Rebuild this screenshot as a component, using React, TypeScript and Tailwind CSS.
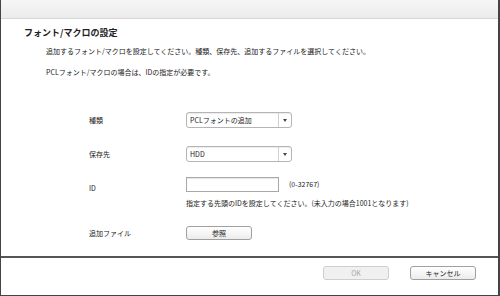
import React from 'react';

const font = { fontFamily: '"Noto Sans CJK JP", "Liberation Sans", sans-serif' };

function Select({ value }: { value: string }) {
  return (
    <div className="flex h-[16px] w-[106px] items-stretch rounded-[3px] border border-[#b5b5b5] bg-white shadow-[inset_0_1px_1px_rgba(0,0,0,0.08)]">
      <div className="flex flex-1 items-center pl-[3px] text-[7px] text-[#222]">{value}</div>
      <div className="flex w-[13px] items-center justify-center border-l border-[#d0d0d0]">
        <span className="block h-0 w-0 border-x-[2px] border-t-[3px] border-x-transparent border-t-[#444]" />
      </div>
    </div>
  );
}

function Button({ label, disabled = false }: { label: string; disabled?: boolean }) {
  return (
    <div
      className={`flex h-[14px] w-[66px] items-center justify-center rounded-[3px] border text-[7px] ${
        disabled
          ? 'border-[#cfcfcf] bg-[#f0f0f0] text-[#a8a8a8]'
          : 'border-[#a0a0a0] bg-gradient-to-b from-white to-[#ececec] text-[#222]'
      }`}
    >
      {label}
    </div>
  );
}

export default function App() {
  return (
    <div style={font} className="flex h-[296px] w-[500px] flex-col border-b border-l border-r-2 border-[#444] bg-white text-[#222]">
      {/* title bar strip */}
      <div className="h-[19px] shrink-0 border-b border-[#d6d6d6] bg-gradient-to-b from-[#f6f6f6] to-[#ebebeb]" />

      <div className="flex-1 pl-[23px] pt-[8px]">
        <h1 className="text-[9px] font-bold leading-[12px]">フォント/マクロの設定</h1>
        <p className="mt-[7px] pl-[22px] text-[7px] leading-[10px]">
          追加するフォント/マクロを設定してください。種類、保存先、追加するファイルを選択してください。
        </p>
        <p className="mt-[11px] pl-[22px] text-[7px] leading-[10px]">
          PCLフォント/マクロの場合は、IDの指定が必要です。
        </p>

        {/* form */}
        <div className="mt-[35px] grid grid-cols-[97px_1fr] items-center gap-y-[18px] pl-[65px] text-[7px]">
          <span>種類</span>
          <Select value="PCLフォントの追加" />
          <span>保存先</span>
          <Select value="HDD" />
          <span className="self-start pt-[3px]">ID</span>
          <div className="-mt-[3px]">
            <div className="flex items-center gap-[10px]">
              <div className="h-[15px] w-[93px] border border-[#a8a8a8] bg-white shadow-[inset_0_1px_1px_rgba(0,0,0,0.1)]" />
              <span>(0-32767)</span>
            </div>
            <p className="mt-[6px] leading-[10px]">指定する先頭のIDを設定してください。(未入力の場合1001となります)</p>
          </div>
          <span>追加ファイル</span>
          <Button label="参照" />
        </div>
      </div>

      <div className="flex h-[39px] shrink-0 items-start justify-end gap-[21px] border-t-2 border-[#555] pr-[22px] pt-[8px]">
        <Button label="OK" disabled />
        <Button label="キャンセル" />
      </div>
    </div>
  );
}
